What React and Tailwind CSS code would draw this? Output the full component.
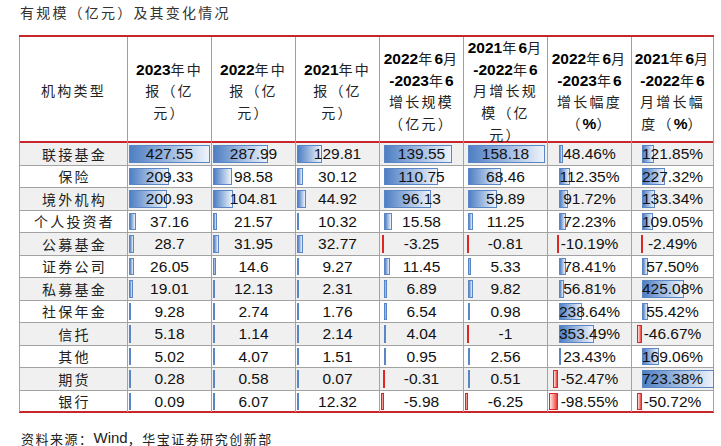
import React from "react";

const rows = [
  ["联接基金", "427.55", "287.99", "129.81", "139.55", "158.18", "48.46%", "121.85%"],
  ["保险", "209.33", "98.58", "30.12", "110.75", "68.46", "112.35%", "227.32%"],
  ["境外机构", "200.93", "104.81", "44.92", "96.13", "59.89", "91.72%", "133.34%"],
  ["个人投资者", "37.16", "21.57", "10.32", "15.58", "11.25", "72.23%", "109.05%"],
  ["公募基金", "28.7", "31.95", "32.77", "-3.25", "-0.81", "-10.19%", "-2.49%"],
  ["证券公司", "26.05", "14.6", "9.27", "11.45", "5.33", "78.41%", "57.50%"],
  ["私募基金", "19.01", "12.13", "2.31", "6.89", "9.82", "56.81%", "425.08%"],
  ["社保年金", "9.28", "2.74", "1.76", "6.54", "0.98", "238.64%", "55.42%"],
  ["信托", "5.18", "1.14", "2.14", "4.04", "-1", "353.49%", "-46.67%"],
  ["其他", "5.02", "4.07", "1.51", "0.95", "2.56", "23.43%", "169.06%"],
  ["期货", "0.28", "0.58", "0.07", "-0.31", "0.51", "-52.47%", "723.38%"],
  ["银行", "0.09", "6.07", "12.32", "-5.98", "-6.25", "-98.55%", "-50.72%"],
];

// per column: axis offset (px from cell left edge), px per unit
const scales = [
  null,
  { axis: 1, k: 81 / 427.55 },
  { axis: 1, k: 81 / 427.55 },
  { axis: 1, k: 81 / 427.55 },
  { axis: 4, k: 0.487 },
  { axis: 4, k: 0.487 },
  { axis: 10.5, k: 0.0996 },
  { axis: 10, k: 0.0996 },
];

const headers = [
  ["机构类型"],
  ["2023年中", "报（亿", "元）"],
  ["2022年中", "报（亿", "元）"],
  ["2021年中", "报（亿", "元）"],
  ["2022年6月", "-2023年6", "增长规模", "（亿元）"],
  ["2021年6月", "-2022年6", "月增长规", "模（亿", "元）"],
  ["2022年6月", "-2023年6", "增长幅度", "（%）"],
  ["2021年6月", "-2022年6", "月增长幅", "度（%）"],
];

const CJK = "font-['Noto_Sans_CJK_SC',sans-serif]";
const LAT = "font-['Liberation_Sans',Arial,sans-serif]";

function HeaderLine({ text }) {
  const parts = text.split(/([0-9\-%]+)/).filter(Boolean);
  return (
    <div className="h-[21.6px] flex items-center justify-center whitespace-nowrap">
      {parts.map((p, i) =>
        /^[0-9\-%]+$/.test(p) ? (
          <span key={i} className={`${LAT} font-bold text-[15.5px] text-black`}>
            {p}
          </span>
        ) : (
          <span key={i} className={`${CJK} text-[14px] tracking-[2.2px] text-[#222]`}>
            {p}
          </span>
        )
      )}
    </div>
  );
}

function Bar({ value, col }) {
  const s = scales[col];
  const v = parseFloat(value);
  const w = Math.max(Math.abs(v) * s.k, 1.2);
  if (v >= 0) {
    return (
      <div
        className="absolute top-[2px] bottom-[2px] border border-[#5b86c6] bg-gradient-to-r from-[#4f7fc3] to-[#eef3fa]"
        style={{ left: s.axis, width: w }}
      />
    );
  }
  return (
    <div
      className="absolute top-[2px] bottom-[2px] border border-[#e02525] bg-gradient-to-r from-[#fde3e3] to-[#e53535]"
      style={{ left: s.axis - w, width: w }}
    />
  );
}

const gridCols = "grid grid-cols-[108px_84px_84px_84px_84px_84px_84px_83px]";

export default function App() {
  return (
    <div className="w-[721px] h-[446px] bg-white overflow-hidden">
      <div className={`${CJK} h-[35px] pl-[20px] pt-[2px] text-[14px] tracking-[2.2px] text-[#333]`}>
        有规模（亿元）及其变化情况
      </div>
      <div className="ml-[19px] w-[695px]">
        <div className={`${gridCols} h-[108px] border-t-2 border-b-2 border-[#c9252c]`}>
          {headers.map((lines, ci) => (
            <div
              key={ci}
              className={`flex flex-col justify-center border-l border-[#9f9f9f] ${ci === 7 ? "border-r" : ""}`}
            >
              {lines.map((l, li) => (
                <HeaderLine key={li} text={l} />
              ))}
            </div>
          ))}
        </div>
        {rows.map((r, ri) => (
          <div
            key={ri}
            className={`${gridCols} ${ri % 2 === 0 ? "h-[23px] bg-[#f0f0f0]" : "h-[22px] bg-white"} ${
              ri === rows.length - 1 ? "border-b-2 border-[#c9252c]" : "border-b border-[#a3a3a3]"
            }`}
          >
            {r.map((c, ci) => (
              <div
                key={ci}
                className={`relative flex items-center justify-center border-l border-[#a3a3a3] ${
                  ci === 7 ? "border-r" : ""
                }`}
              >
                {ci === 0 ? (
                  <span className={`${CJK} text-[14px] tracking-[2.2px] pl-[2px] text-[#222]`}>{c}</span>
                ) : (
                  <>
                    <Bar value={c} col={ci} />
                    <span className={`${LAT} relative text-[15.5px] leading-none text-[#111]`}>{c}</span>
                  </>
                )}
              </div>
            ))}
          </div>
        ))}
      </div>
      <div className="pl-[21px] mt-[14px] flex items-center text-[#222]">
        <span className={`${CJK} text-[13px] tracking-[1.5px]`}>资料来源：</span>
        <span className={`${LAT} text-[15px]`}>Wind</span>
        <span className={`${CJK} text-[13px] tracking-[1.5px]`}>，华宝证券研究创新部</span>
      </div>
    </div>
  );
}
